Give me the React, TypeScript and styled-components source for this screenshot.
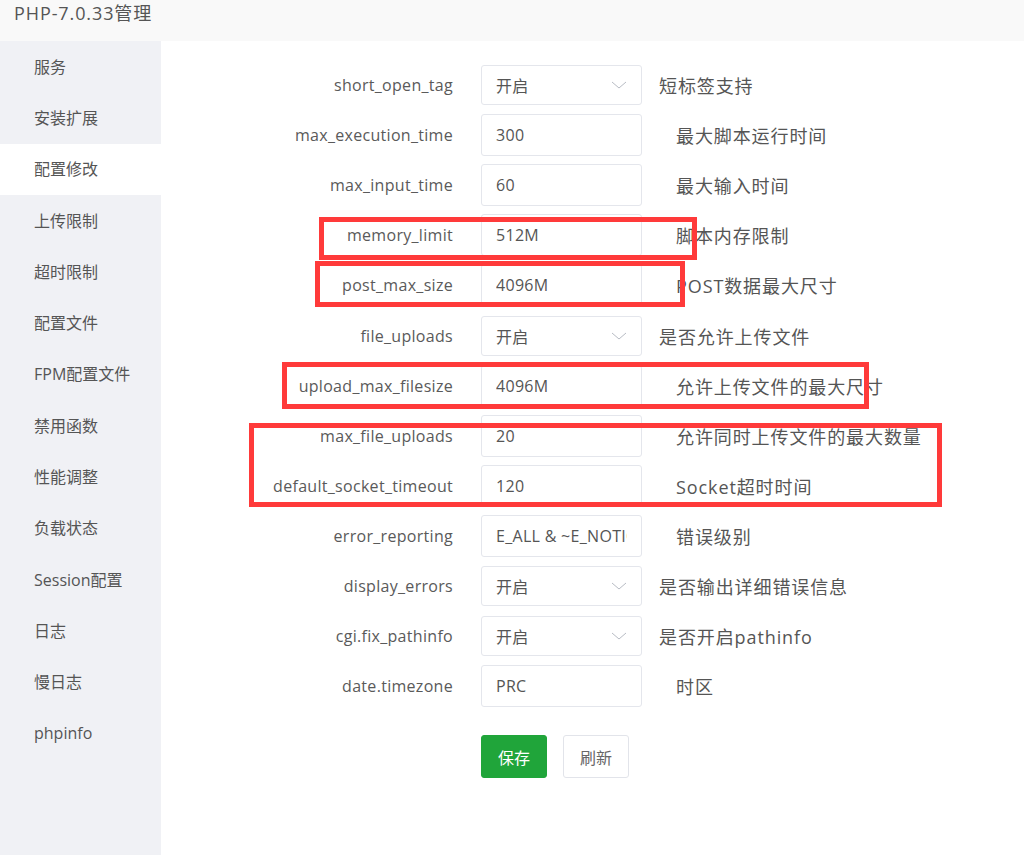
import React from "react";
import styled, { createGlobalStyle } from "styled-components";

const GlobalStyle = createGlobalStyle`
  html, body {
    margin: 0;
    padding: 0;
    background: #fff;
  }
  body {
    font-family: "Open Sans", "Noto Sans CJK SC", sans-serif;
    color: #555;
  }
`;

/* ─── Layout ─── */

const Page = styled.div`
  position: relative;
  width: 1024px;
  height: 855px;
  display: flex;
  flex-direction: column;
  overflow: hidden;
`;

const TopBar = styled.header`
  height: 41px;
  flex-shrink: 0;
  background: #f9f9f9;
  padding-left: 14px;
  box-sizing: border-box;
`;

const Title = styled.div`
  font-size: 18px;
  letter-spacing: 0.9px;
  line-height: 26px;
  color: #555;
`;

const Body = styled.div`
  flex: 1;
  display: flex;
`;

const Sidebar = styled.nav`
  width: 161px;
  flex-shrink: 0;
  background: #f0f1f5;
`;

const MenuItem = styled.div<{ $active?: boolean }>`
  height: 51.3px;
  display: flex;
  align-items: center;
  padding-left: 34px;
  padding-bottom: 2px;
  box-sizing: border-box;
  font-size: 16px;
  color: #555;
  background: ${(p) => (p.$active ? "#fff" : "transparent")};
`;

const Content = styled.main`
  flex: 1;
  background: #fff;
  padding-top: 19px;
`;

const Row = styled.div`
  height: 50.1px;
  display: flex;
  align-items: center;
`;

const Label = styled.div`
  width: 292px;
  text-align: right;
  font-size: 16px;
  letter-spacing: 0.3px;
  color: #5a5a5a;
  white-space: nowrap;
`;

const Field = styled.div<{ $select?: boolean }>`
  margin-left: 28px;
  width: 161px;
  height: ${(p) => (p.$select ? "40px" : "42px")};
  box-sizing: border-box;
  border: 1px solid #e4e6ec;
  border-radius: 3px;
  padding: 0 14px 0 14px;
  display: flex;
  align-items: center;
  gap: 8px;
  font-size: 16px;
  letter-spacing: 0.3px;
  color: #555;
  white-space: nowrap;
`;

const Value = styled.span`
  flex: 1;
  min-width: 0;
  overflow: hidden;
`;

const Chevron = styled.svg`
  width: 16px;
  height: 10px;
  flex-shrink: 0;
`;

const Desc = styled.div<{ $select?: boolean }>`
  margin-left: ${(p) => (p.$select ? "17px" : "34px")};
  font-size: 18px;
  letter-spacing: 0.9px;
  color: #555;
  white-space: nowrap;
`;

const Actions = styled.div`
  display: flex;
  gap: 16px;
  margin-top: 24px;
  margin-left: 320px;
`;

const Btn = styled.button<{ $primary?: boolean }>`
  width: 66px;
  height: 43px;
  border-radius: 3px;
  font-family: "Open Sans", "Noto Sans CJK SC", sans-serif;
  font-size: 16px;
  cursor: pointer;
  border: 1px solid ${(p) => (p.$primary ? "#20a53a" : "#e2e4ea")};
  background: ${(p) => (p.$primary ? "#20a53a" : "#fff")};
  color: ${(p) => (p.$primary ? "#fff" : "#666")};
`;

/* annotation boxes drawn over the screenshot */
const Mark = styled.div`
  position: absolute;
  border: 5px solid #ff3a3a;
  box-sizing: border-box;
  pointer-events: none;
`;

const menu = [
  "服务",
  "安装扩展",
  "配置修改",
  "上传限制",
  "超时限制",
  "配置文件",
  "FPM配置文件",
  "禁用函数",
  "性能调整",
  "负载状态",
  "Session配置",
  "日志",
  "慢日志",
  "phpinfo",
];

type Setting = { name: string; value: string; desc: string; select?: boolean };

const settings: Setting[] = [
  { name: "short_open_tag", value: "开启", desc: "短标签支持", select: true },
  { name: "max_execution_time", value: "300", desc: "最大脚本运行时间" },
  { name: "max_input_time", value: "60", desc: "最大输入时间" },
  { name: "memory_limit", value: "512M", desc: "脚本内存限制" },
  { name: "post_max_size", value: "4096M", desc: "POST数据最大尺寸" },
  { name: "file_uploads", value: "开启", desc: "是否允许上传文件", select: true },
  { name: "upload_max_filesize", value: "4096M", desc: "允许上传文件的最大尺寸" },
  { name: "max_file_uploads", value: "20", desc: "允许同时上传文件的最大数量" },
  { name: "default_socket_timeout", value: "120", desc: "Socket超时时间" },
  { name: "error_reporting", value: "E_ALL & ~E_NOTICE", desc: "错误级别" },
  { name: "display_errors", value: "开启", desc: "是否输出详细错误信息", select: true },
  { name: "cgi.fix_pathinfo", value: "开启", desc: "是否开启pathinfo", select: true },
  { name: "date.timezone", value: "PRC", desc: "时区" },
];

const marks = [
  { left: 319, top: 217, width: 378, height: 43 },
  { left: 315, top: 261, width: 370, height: 46 },
  { left: 282, top: 362, width: 587, height: 47 },
  { left: 249, top: 423, width: 693, height: 84 },
];

export default function App() {
  return (
    <Page>
      <GlobalStyle />
      <TopBar>
        <Title>PHP-7.0.33管理</Title>
      </TopBar>
      <Body>
        <Sidebar>
          {menu.map((m) => (
            <MenuItem key={m} $active={m === "配置修改"}>
              {m}
            </MenuItem>
          ))}
        </Sidebar>
        <Content>
          {settings.map((s) => (
            <Row key={s.name}>
              <Label>{s.name}</Label>
              <Field $select={s.select}>
                <Value>{s.value}</Value>
                {s.select && (
                  <Chevron viewBox="0 0 16 10">
                    <polyline points="1,2 8,8 15,2" fill="none" stroke="#b8bcc4" strokeWidth="1" />
                  </Chevron>
                )}
              </Field>
              <Desc $select={s.select}>{s.desc}</Desc>
            </Row>
          ))}
          <Actions>
            <Btn $primary>保存</Btn>
            <Btn>刷新</Btn>
          </Actions>
        </Content>
      </Body>
      {marks.map((m, i) => (
        <Mark key={i} style={{ left: m.left, top: m.top, width: m.width, height: m.height }} />
      ))}
    </Page>
  );
}
